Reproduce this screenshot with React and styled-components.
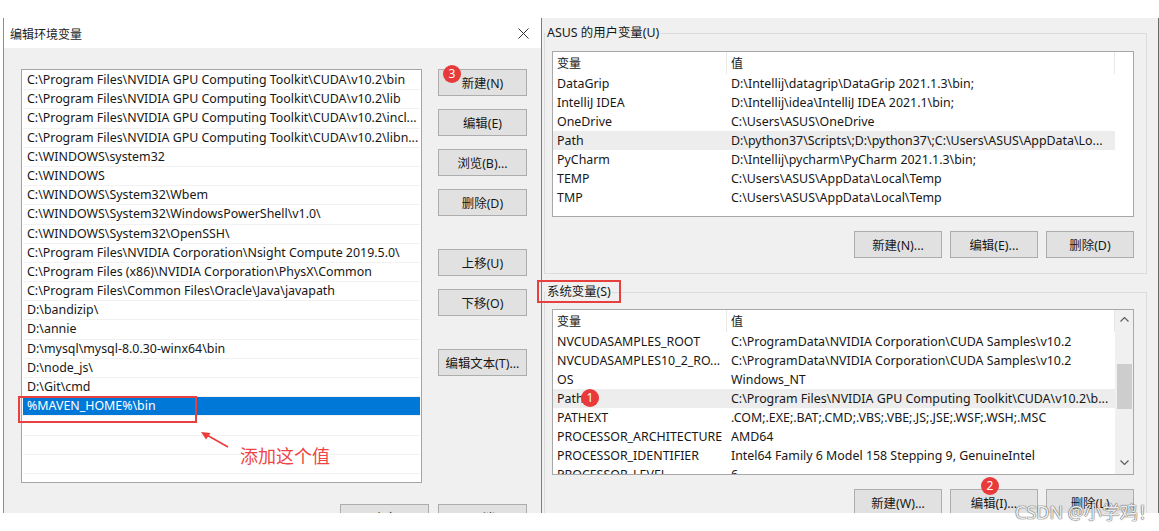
import React from "react";
import styled, { createGlobalStyle } from "styled-components";

const GlobalStyle = createGlobalStyle`
  html, body {
    margin: 0;
    padding: 0;
    background: #fff;
  }
  body {
    font-family: "Noto Sans", "Noto Sans CJK SC", sans-serif;
    font-size: 12.4px;
    color: #171717;
  }
`;

const leftPaths = [
  "C:\\Program Files\\NVIDIA GPU Computing Toolkit\\CUDA\\v10.2\\bin",
  "C:\\Program Files\\NVIDIA GPU Computing Toolkit\\CUDA\\v10.2\\lib",
  "C:\\Program Files\\NVIDIA GPU Computing Toolkit\\CUDA\\v10.2\\incl...",
  "C:\\Program Files\\NVIDIA GPU Computing Toolkit\\CUDA\\v10.2\\libn...",
  "C:\\WINDOWS\\system32",
  "C:\\WINDOWS",
  "C:\\WINDOWS\\System32\\Wbem",
  "C:\\WINDOWS\\System32\\WindowsPowerShell\\v1.0\\",
  "C:\\WINDOWS\\System32\\OpenSSH\\",
  "C:\\Program Files\\NVIDIA Corporation\\Nsight Compute 2019.5.0\\",
  "C:\\Program Files (x86)\\NVIDIA Corporation\\PhysX\\Common",
  "C:\\Program Files\\Common Files\\Oracle\\Java\\javapath",
  "D:\\bandizip\\",
  "D:\\annie",
  "D:\\mysql\\mysql-8.0.30-winx64\\bin",
  "D:\\node_js\\",
  "D:\\Git\\cmd",
  "%MAVEN_HOME%\\bin",
  "",
  "",
  "",
  "",
];

const userVars = [
  ["DataGrip", "D:\\Intellij\\datagrip\\DataGrip 2021.1.3\\bin;"],
  ["IntelliJ IDEA", "D:\\Intellij\\idea\\IntelliJ IDEA 2021.1\\bin;"],
  ["OneDrive", "C:\\Users\\ASUS\\OneDrive"],
  ["Path", "D:\\python37\\Scripts\\;D:\\python37\\;C:\\Users\\ASUS\\AppData\\Lo..."],
  ["PyCharm", "D:\\Intellij\\pycharm\\PyCharm 2021.1.3\\bin;"],
  ["TEMP", "C:\\Users\\ASUS\\AppData\\Local\\Temp"],
  ["TMP", "C:\\Users\\ASUS\\AppData\\Local\\Temp"],
];

const sysVars = [
  ["NVCUDASAMPLES_ROOT", "C:\\ProgramData\\NVIDIA Corporation\\CUDA Samples\\v10.2"],
  ["NVCUDASAMPLES10_2_RO...", "C:\\ProgramData\\NVIDIA Corporation\\CUDA Samples\\v10.2"],
  ["OS", "Windows_NT"],
  ["Path", "C:\\Program Files\\NVIDIA GPU Computing Toolkit\\CUDA\\v10.2\\b..."],
  ["PATHEXT", ".COM;.EXE;.BAT;.CMD;.VBS;.VBE;.JS;.JSE;.WSF;.WSH;.MSC"],
  ["PROCESSOR_ARCHITECTURE", "AMD64"],
  ["PROCESSOR_IDENTIFIER", "Intel64 Family 6 Model 158 Stepping 9, GenuineIntel"],
  ["PROCESSOR_LEVEL", "6"],
];

function App() {
  return (
    <>
      <GlobalStyle />
      <Page>
        <Dialog>
          <TitleBar>
            <span>编辑环境变量</span>
            <svg width="11" height="11" viewBox="0 0 11 11">
              <path d="M0.5 0.5 L10.5 10.5 M10.5 0.5 L0.5 10.5" stroke="#333" strokeWidth="1" />
            </svg>
          </TitleBar>
          <DialogBody>
            <TopArea>
              <PathList>
                {leftPaths.map((p, i) => (
                  <PathRow key={i} $selected={i === 17}>
                    {p}
                  </PathRow>
                ))}
              </PathList>
              <ButtonColumn>
                <WinButton>
                  新建(N)
                  <Badge $left={4} $top={-5}>3</Badge>
                </WinButton>
                <WinButton $space={13}>编辑(E)</WinButton>
                <WinButton $space={13}>浏览(B)...</WinButton>
                <WinButton $space={13}>删除(D)</WinButton>
                <WinButton $space={33}>上移(U)</WinButton>
                <WinButton $space={13}>下移(O)</WinButton>
                <WinButton $space={33}>编辑文本(T)...</WinButton>
              </ButtonColumn>
            </TopArea>
            <BottomButtons>
              <WinButton>确定</WinButton>
              <WinButton>取消</WinButton>
            </BottomButtons>
          </DialogBody>
        </Dialog>

        <EnvWindow>
          <GroupBox>
            <Legend>ASUS 的用户变量(U)</Legend>
            <ListView>
              <ListContent>
                <HeaderRow>
                  <NameHead>变量</NameHead>
                  <ValueHead>值</ValueHead>
                </HeaderRow>
                {userVars.map(([k, v]) => (
                  <VarRow key={k} $active={k === "Path"}>
                    <NameCell>{k}</NameCell>
                    <ValueCell>{v}</ValueCell>
                  </VarRow>
                ))}
              </ListContent>
              <ScrollTrack $hidden />
            </ListView>
            <GroupButtons>
              <WinButton $wide>新建(N)...</WinButton>
              <WinButton $wide>编辑(E)...</WinButton>
              <WinButton $wide>删除(D)</WinButton>
            </GroupButtons>
          </GroupBox>

          <GroupBox $second>
            <Legend>系统变量(S)</Legend>
            <ListView>
              <ListContent>
                <HeaderRow>
                  <NameHead>变量</NameHead>
                  <ValueHead>值</ValueHead>
                </HeaderRow>
                {sysVars.map(([k, v]) => (
                  <VarRow key={k} $active={k === "Path"}>
                    <NameCell>
                      {k}
                      {k === "Path" && <Badge $left={28} $top={0}>1</Badge>}
                    </NameCell>
                    <ValueCell>{v}</ValueCell>
                  </VarRow>
                ))}
              </ListContent>
              <ScrollTrack>
                <Chevron viewBox="0 0 9 5">
                  <path d="M0.5 4.5 L4.5 0.5 L8.5 4.5" />
                </Chevron>
                <Thumb />
                <Chevron viewBox="0 0 9 5" $down>
                  <path d="M0.5 0.5 L4.5 4.5 L8.5 0.5" />
                </Chevron>
              </ScrollTrack>
            </ListView>
            <GroupButtons>
              <WinButton $wide>新建(W)...</WinButton>
              <WinButton $wide>
                编辑(I)...
                <Badge $left={30} $top={-13}>2</Badge>
              </WinButton>
              <WinButton $wide>删除(L)</WinButton>
            </GroupButtons>
          </GroupBox>
        </EnvWindow>

        <MarkBox $x={18} $y={396} $w={179} $h={27} />
        <MarkBox $x={537} $y={280} $w={84} $h={23} />
        <Arrow width="40" height="30" viewBox="0 0 40 30">
          <path d="M33 22 L10 9" stroke="#ee3b3b" strokeWidth="1.6" />
          <path d="M6 7 L15.5 8 L11 14.5 Z" fill="#ee3b3b" />
        </Arrow>
        <Note>添加这个值</Note>
        <Watermark>CSDN @小学鸡！</Watermark>
      </Page>
    </>
  );
}

export default App;

const Page = styled.div`
  position: relative;
  width: 1159px;
  height: 531px;
  overflow: hidden;
  box-sizing: border-box;
  padding-top: 18px;
  display: flex;
  align-items: flex-start;
  background: #fff;
`;

const Dialog = styled.section`
  margin-left: 3px;
  width: 538px;
  height: 495px;
  box-sizing: border-box;
  border-left: 1px solid #8d8d8d;
  display: flex;
  flex-direction: column;
  overflow: hidden;
`;

const TitleBar = styled.div`
  height: 30px;
  flex-shrink: 0;
  background: #fff;
  display: flex;
  align-items: center;
  justify-content: space-between;
  padding: 0 12px 0 6px;
  font-family: "Noto Sans CJK SC", sans-serif;
  font-size: 12px;
  color: #222;
`;

const DialogBody = styled.div`
  flex: 1;
  background: #f0f0f0;
  padding: 21px 14px 0 17px;
  display: flex;
  flex-direction: column;
`;

const TopArea = styled.div`
  display: flex;
  gap: 16px;
  align-items: flex-start;
`;

const PathList = styled.div`
  width: 401px;
  height: 414px;
  box-sizing: border-box;
  background: #fff;
  border: 1px solid #a5a5a5;
  padding: 1px 0;
  overflow: hidden;
`;

const PathRow = styled.div`
  height: 19.2px;
  box-sizing: border-box;
  margin: 0 1px;
  padding-left: 4px;
  line-height: 18px;
  white-space: nowrap;
  overflow: hidden;
  border-bottom: 1px solid #f2f2f2;
  background: ${(p) => (p.$selected ? "#0078d7" : "#fff")};
  color: ${(p) => (p.$selected ? "#fff" : "#171717")};
`;

const ButtonColumn = styled.div`
  display: flex;
  flex-direction: column;
`;

const WinButton = styled.div`
  position: relative;
  width: ${(p) => (p.$wide ? "88px" : "89px")};
  height: 27px;
  margin-top: ${(p) => p.$space || 0}px;
  box-sizing: border-box;
  background: #e1e1e1;
  border: 1px solid #adadad;
  display: flex;
  align-items: center;
  justify-content: center;
  font-family: "Noto Sans", "Noto Sans CJK SC", sans-serif;
  font-size: 12.4px;
  color: #171717;
  flex-shrink: 0;
`;

const BottomButtons = styled.div`
  display: flex;
  justify-content: flex-end;
  gap: 9px;
  margin-top: 21px;
`;

const Badge = styled.span`
  position: absolute;
  left: ${(p) => p.$left}px;
  top: ${(p) => p.$top}px;
  width: 18px;
  height: 18px;
  border-radius: 50%;
  background: #e83a3a;
  color: #fff;
  font-family: "Noto Sans", sans-serif;
  font-size: 12px;
  line-height: 18px;
  text-align: center;
`;

const EnvWindow = styled.section`
  width: 618px;
  height: 495px;
  box-sizing: border-box;
  background: #f0f0f0;
  border-left: 1px solid #7d7d7d;
  border-right: 1px solid #6a6a6a;
  padding: 7px 11px 0 2px;
  overflow: hidden;
`;

const GroupBox = styled.fieldset`
  margin: ${(p) => (p.$second ? "10px 0 0" : "0")};
  padding: ${(p) => (p.$second ? "9px" : "10px")} 12px 15px 7px;
  border: 1px solid #dcdcdc;
  min-width: 0;
`;

const Legend = styled.legend`
  padding: 0 1px;
  margin-left: -6px;
  line-height: 16px;
  font-family: "Noto Sans", "Noto Sans CJK SC", sans-serif;
  font-size: 12.4px;
  color: #171717;
`;

const ListView = styled.div`
  display: flex;
  height: 166px;
  box-sizing: border-box;
  background: #fff;
  border: 1px solid #a8a8a8;
  overflow: hidden;
`;

const ListContent = styled.div`
  flex: 1;
  min-width: 0;
`;

const HeaderRow = styled.div`
  height: 22px;
  display: flex;
  border-right: 1px solid #e8e8e8;
`;

const NameHead = styled.div`
  width: 174px;
  flex-shrink: 0;
  box-sizing: border-box;
  padding-left: 4px;
  border-right: 1px solid #e8e8e8;
  line-height: 22px;
  font-family: "Noto Sans CJK SC", sans-serif;
  font-size: 12px;
`;

const ValueHead = styled(NameHead)`
  width: auto;
  flex: 1;
  border-right: none;
`;

const VarRow = styled.div`
  height: 19px;
  display: flex;
  line-height: 19px;
  background: ${(p) => (p.$active ? "#ededed" : "transparent")};
`;

const NameCell = styled.div`
  position: relative;
  width: 174px;
  flex-shrink: 0;
  box-sizing: border-box;
  padding-left: 4px;
  white-space: nowrap;
`;

const ValueCell = styled.div`
  flex: 1;
  min-width: 0;
  padding-left: 4px;
  white-space: nowrap;
  overflow: hidden;
`;

const ScrollTrack = styled.div`
  width: 18px;
  flex-shrink: 0;
  background: ${(p) => (p.$hidden ? "#fff" : "#f0f0f0")};
  display: flex;
  flex-direction: column;
  align-items: center;
  padding-top: 7px;
  box-sizing: border-box;
`;

const Chevron = styled.svg`
  width: 9px;
  height: 5px;
  margin-top: ${(p) => (p.$down ? "51px" : "0")};
  fill: none;
  stroke: #606060;
  stroke-width: 1.2;
`;

const Thumb = styled.div`
  width: 15px;
  height: 45px;
  margin-top: 42px;
  background: #cdcdcd;
`;

const GroupButtons = styled.div`
  display: flex;
  justify-content: flex-end;
  gap: 8px;
  margin-top: 14px;
`;

const MarkBox = styled.div`
  position: absolute;
  left: ${(p) => p.$x}px;
  top: ${(p) => p.$y}px;
  width: ${(p) => p.$w}px;
  height: ${(p) => p.$h}px;
  box-sizing: border-box;
  border: 2px solid #e8403f;
`;

const Arrow = styled.svg`
  position: absolute;
  left: 195px;
  top: 425px;
`;

const Note = styled.div`
  position: absolute;
  left: 240px;
  top: 442px;
  font-family: "Noto Sans CJK SC", sans-serif;
  font-size: 18px;
  line-height: 26px;
  color: #f04545;
`;

const Watermark = styled.div`
  position: absolute;
  left: 1015px;
  top: 499px;
  font-family: "Noto Sans", "Noto Sans CJK SC", sans-serif;
  font-size: 18px;
  line-height: 26px;
  color: rgba(255, 255, 255, 0.9);
  text-shadow: 0 0 1px #6a6a6a, 0 0 1px #6a6a6a, 0 0 1px #6a6a6a;
`;
